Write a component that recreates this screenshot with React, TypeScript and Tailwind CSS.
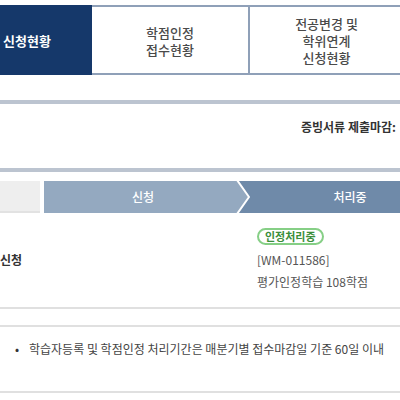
// Credit-recognition status panel: tabs, deadline strip, step bar, one request row and a notice.

const FONT = "font-['Noto_Sans_CJK_KR','Noto_Sans',sans-serif]";

function Tabs() {
  return (
    <div className="flex h-[70px] text-[13px] leading-[17px] font-medium text-[#4a4a4a]">
      <div className="flex w-[92px] shrink-0 items-center bg-[#15386a] pl-[3px] font-bold text-white">신청현황</div>
      <div className="flex w-[156px] shrink-0 items-center justify-center border-t-2 border-b-2 border-[#8fa0b8] pt-[2px] text-center">
        <div>
          <p>학점인정</p>
          <p>접수현황</p>
        </div>
      </div>
      <div className="flex w-[160px] shrink-0 items-center justify-center border-t-2 border-b-2 border-l-2 border-[#8fa0b8] pr-[5px] text-center">
        <div>
          <p>전공변경 및</p>
          <p>학위연계</p>
          <p>신청현황</p>
        </div>
      </div>
    </div>
  );
}

function Deadline() {
  return (
    <div className="mt-[25px] h-[72px] border-t-4 border-b-4 border-[#bcc4d0] pt-[15px] pl-[301px] text-[12px] leading-4 font-bold whitespace-nowrap text-[#333]">
      증빙서류 제출마감:
    </div>
  );
}

function Steps() {
  return (
    <div className="mt-[9px] flex h-[32px] text-[12px] font-medium text-white">
      <div className="w-[40px] shrink-0 border-b-2 border-[#e2e2e2] bg-[#eeeeee]" />
      <div className="w-[4px] shrink-0" />
      <div className="relative flex w-[206px] shrink-0 items-center justify-center bg-[#94a9c0]">
        <span className="-ml-[8px]">신청</span>
        <svg className="absolute top-0 right-0" width={16} height={32} viewBox="0 0 16 32">
          <rect width={16} height={32} fill="#6f8aa9" />
          <polygon points="0,0 3,0 15,16 3,32 0,32" fill="#94a9c0" />
          <polyline points="3,-1 15,16 3,33" fill="none" stroke="#fff" strokeWidth={2} />
        </svg>
      </div>
      <div className="flex w-[200px] shrink-0 items-center justify-center bg-[#6f8aa9]">처리중</div>
    </div>
  );
}

function RequestRow() {
  return (
    <div className="flex h-[96px] items-center border-b-2 border-[#e0e0e0] text-[12px]">
      <div className="w-[257px] shrink-0 font-bold text-[#333]">신청</div>
      <div className="flex flex-col items-start">
        <span className="rounded-full border-2 border-[#86cf86] px-[6px] text-[11px] leading-[13px] font-bold text-[#3b8e3b]">
          인정처리중
        </span>
        <span className="mt-[4px] leading-[22px] text-[#555]">[WM-011586]</span>
        <span className="leading-[22px] text-[#555]">평가인정학습 108학점</span>
      </div>
    </div>
  );
}

function Notice() {
  return (
    <div className="mt-[16px] h-[68px] border-t-2 border-b-2 border-[#e0e0e0] pt-[14px] text-[12px] leading-4 text-[#444]">
      <div className="flex">
        <span className="w-[29px] shrink-0 pl-[15px] text-[#333]">•</span>
        <span className="whitespace-nowrap">학습자등록 및 학점인정 처리기간은 매분기별 접수마감일 기준 60일 이내</span>
      </div>
    </div>
  );
}

export default function App() {
  return (
    <div className={`h-[400px] w-[400px] overflow-hidden bg-white pt-[5px] ${FONT}`}>
      <Tabs />
      <Deadline />
      <Steps />
      <RequestRow />
      <Notice />
    </div>
  );
}
